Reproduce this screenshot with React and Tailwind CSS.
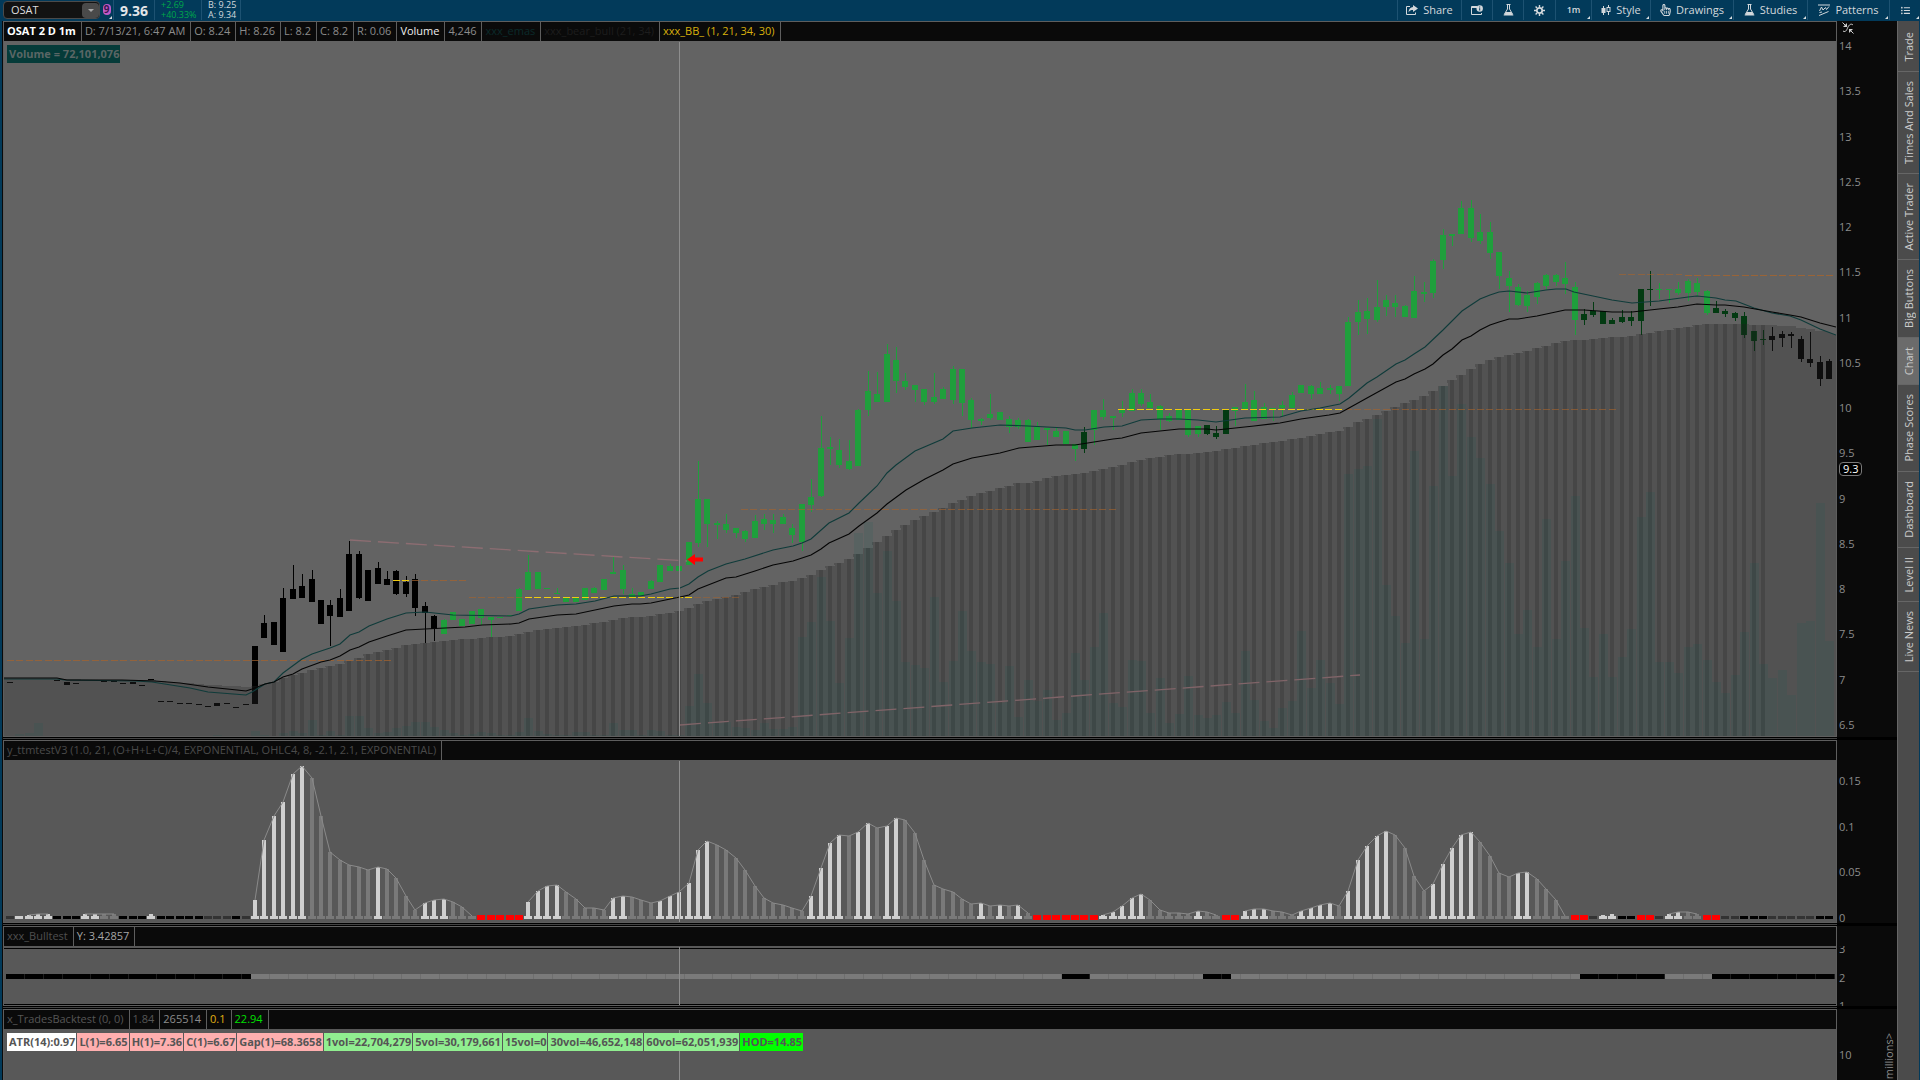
import { FaListUl, FaRegHandPointer } from "react-icons/fa";

// [high, open/close top, open/close bottom, low] for every one-minute bar
const candles = [
  [682, 682, 683, 683], null, null, null, null,
  [680, 680, 681, 681], [682, 682, 685, 685], [683, 683, 684, 684], null, null,
  [681, 681, 682, 682], [681, 681, 682, 682], [683, 683, 684, 684], [682, 682, 684, 684], [685, 685, 686, 686],
  [679, 679, 680, 680], [701, 701, 702, 702], [701, 701, 702, 702], [703, 703, 704, 704], [703, 703, 704, 704],
  [704, 704, 705, 705], [706, 706, 707, 707], [703, 703, 706, 706], [703, 703, 704, 704], [707, 707, 708, 708],
  [704, 704, 705, 705], [646, 646, 704, 704], [615, 623, 638, 638], [622, 622, 645, 645], [588, 598, 652, 652],
  [565, 589, 599, 599], [574, 586, 598, 598], [570, 579, 602, 602], [600, 600, 624, 624], [600, 605, 616, 646],
  [589, 598, 617, 617], [541, 554, 611, 611], [551, 554, 598, 599], [570, 570, 601, 601], [562, 568, 584, 584],
  [571, 579, 585, 585], [570, 571, 594, 595], [576, 582, 594, 597], [574, 579, 608, 616], [602, 606, 613, 643],
  [615, 616, 629, 641], [619, 620, 634, 634], [612, 612, 620, 620], [619, 619, 626, 626], [611, 611, 624, 624],
  [609, 609, 618, 625], [617, 617, 620, 637], [617, 617, 618, 618], [615, 615, 616, 616], [588, 589, 611, 611],
  [555, 572, 590, 590], [572, 572, 589, 589], [588, 588, 589, 589], [588, 593, 594, 594], [598, 598, 602, 602],
  [598, 598, 602, 602], [588, 588, 600, 600], [587, 588, 593, 593], [579, 579, 590, 590], [557, 572, 574, 574],
  [565, 570, 589, 594], [588, 594, 597, 598], [592, 592, 596, 596], [580, 581, 589, 589], [565, 565, 582, 582],
  [564, 566, 571, 571], [566, 566, 571, 571], [542, 542, 565, 565], [461, 499, 543, 547], [499, 499, 524, 547],
  [521, 523, 525, 539], [514, 524, 530, 533], [528, 528, 533, 538], [530, 531, 539, 542], [515, 521, 538, 538],
  [514, 519, 524, 530], [514, 520, 524, 533], [514, 517, 524, 524], [524, 528, 535, 543], [504, 504, 542, 551],
  [479, 497, 505, 512], [416, 448, 496, 497], [437, 447, 449, 465], [439, 450, 465, 468], [440, 461, 469, 470],
  [409, 410, 466, 466], [371, 391, 410, 416], [372, 394, 402, 402], [344, 354, 402, 402], [347, 360, 381, 393],
  [373, 381, 387, 390], [385, 385, 390, 402], [389, 389, 402, 405], [373, 397, 402, 404], [387, 389, 399, 399],
  [366, 369, 400, 404], [369, 369, 403, 416], [398, 400, 420, 428], [418, 419, 421, 425], [394, 414, 418, 420],
  [412, 412, 420, 420], [416, 419, 427, 433], [418, 420, 427, 429], [419, 420, 442, 442], [422, 427, 440, 440],
  [428, 428, 430, 445], [428, 431, 437, 437], [431, 431, 444, 444], [444, 444, 449, 461], [427, 432, 449, 453],
  [410, 410, 430, 445], [399, 410, 417, 420], [416, 416, 418, 430], [401, 409, 413, 417], [389, 393, 411, 411],
  [389, 393, 404, 406], [394, 402, 408, 408], [405, 406, 419, 430], [413, 416, 421, 422], [409, 409, 420, 420],
  [409, 409, 435, 437], [426, 426, 434, 437], [425, 425, 434, 435], [426, 433, 437, 439], [409, 410, 434, 434],
  [407, 407, 411, 426], [384, 402, 409, 409], [391, 400, 421, 421], [403, 407, 419, 419], [408, 408, 410, 421],
  [401, 405, 408, 416], [392, 395, 408, 408], [385, 385, 393, 393], [385, 386, 394, 399], [382, 388, 394, 394],
  [385, 388, 390, 394], [386, 386, 394, 401], [317, 322, 386, 386], [300, 312, 322, 335], [298, 311, 319, 334],
  [280, 307, 320, 322], [295, 300, 307, 316], [295, 303, 307, 317], [305, 306, 317, 317], [276, 291, 318, 318],
  [282, 292, 294, 302], [259, 261, 293, 298], [229, 235, 260, 269], [234, 234, 236, 246], [201, 208, 234, 234],
  [200, 208, 238, 242], [214, 232, 241, 244], [222, 232, 253, 259], [252, 252, 276, 289], [271, 278, 286, 312],
  [284, 287, 305, 306], [291, 295, 306, 312], [282, 283, 297, 304], [274, 275, 286, 290], [274, 275, 282, 286],
  [262, 278, 284, 294], [282, 287, 320, 335], [309, 314, 320, 325], [302, 311, 315, 317], [311, 311, 324, 324],
  [318, 320, 324, 324], [310, 317, 322, 323], [311, 317, 321, 326], [289, 289, 321, 335], [271, 289, 290, 306],
  [283, 289, 290, 299], [289, 289, 290, 303], [282, 289, 293, 295], [279, 281, 293, 301], [278, 283, 292, 296],
  [290, 291, 313, 315], [301, 308, 313, 313], [309, 311, 314, 317], [312, 313, 318, 321], [312, 316, 335, 338],
  [331, 331, 341, 351], [330, 339, 340, 345], [327, 336, 340, 351], [331, 334, 338, 347], [332, 334, 336, 348],
  [336, 339, 359, 362], [332, 359, 363, 367], [356, 362, 379, 386], [359, 361, 379, 379],
];

const volumeTops = [
  736, 734, 733, 723, 736, 736, 736, 736, 736, 736, 736, 736, 736, 736, 736, 736, 736, 736, 736, 736,
  736, 736, 735, 736, 736, 736, 731, 735, 736, 733, 731, 733, 720, 735, 731, 735, 716, 716, 728, 733,
  732, 728, 726, 722, 722, 727, 730, 733, 735, 734, 732, 733, 735, 735, 732, 718, 731, 734, 735, 735,
  732, 732, 735, 735, 723, 730, 730, 735, 730, 731, 735, 735, 706, 674, 703, 723, 722, 727, 728, 730,
  723, 729, 729, 727, 637, 622, 577, 621, 683, 638, 533, 522, 593, 551, 601, 662, 665, 668, 597, 682,
  661, 611, 651, 662, 664, 703, 666, 717, 680, 701, 690, 720, 713, 653, 680, 647, 613, 703, 707, 660,
  661, 713, 678, 723, 714, 676, 715, 718, 715, 702, 713, 651, 700, 721, 728, 708, 701, 631, 688, 660,
  683, 704, 474, 469, 466, 419, 585, 616, 643, 451, 639, 486, 386, 476, 404, 437, 458, 484, 531, 563,
  634, 610, 647, 519, 639, 561, 496, 628, 677, 634, 677, 657, 629, 517, 492, 662, 662, 673, 647, 644,
  660, 682, 693, 675, 632, 563, 664, 678, 670, 695, 623, 621, 503, 641,
];

const fastEma =
  "4,679 57,679 65,680 135,681 152,682 190,688 208,692 246,695 252,692 265,684 274,682 283,673 302,659 312,654 330,648 340,644 350,635 359,632 369,626 387,619 406,613 425,612 453,615 511,616 519,614 529,609 557,605 576,604 595,601 614,596 640,596 651,594 670,589 680,588 689,584 698,577 708,571 726,564 745,559 773,550 793,546 802,543 811,539 829,523 849,513 859,503 877,486 887,473 896,465 915,451 943,439 953,431 972,428 1000,425 1028,426 1066,428 1075,430 1085,430 1104,427 1122,426 1141,420 1160,419 1179,419 1198,420 1216,422 1245,418 1280,417 1301,411 1320,408 1340,404 1349,398 1367,383 1377,377 1396,364 1405,360 1414,354 1425,347 1443,330 1462,311 1480,299 1490,295 1499,292 1509,291 1527,293 1546,290 1556,289 1566,289 1574,292 1593,296 1612,300 1632,303 1659,301 1688,297 1697,296 1716,298 1725,300 1736,301 1754,308 1772,313 1790,316 1801,320 1820,329 1836,335";

const slowEma =
  "4,678 57,678 67,680 122,680 155,681 180,683 208,687 237,690 246,691 252,689 265,684 274,682 283,677 293,674 302,669 321,662 330,660 340,656 350,650 359,647 369,642 387,636 406,630 425,629 465,627 482,625 511,624 519,623 529,619 557,615 576,614 614,606 632,604 640,604 651,603 680,597 689,595 698,589 726,578 736,577 755,571 773,565 793,561 811,555 821,549 829,543 849,534 859,526 877,513 887,504 906,490 925,479 943,470 953,464 972,458 1000,453 1019,448 1056,445 1075,445 1094,442 1113,439 1122,438 1141,433 1179,429 1207,429 1216,430 1226,429 1254,426 1280,423 1301,419 1329,415 1340,413 1349,408 1367,398 1396,382 1405,379 1414,374 1425,369 1433,364 1443,355 1452,349 1462,340 1471,336 1480,330 1490,325 1499,322 1509,319 1518,319 1537,316 1565,310 1584,310 1612,312 1632,312 1659,309 1678,307 1697,304 1716,305 1725,305 1744,307 1772,312 1790,315 1801,317 1820,323 1836,327";

const cloud = [
  [4, 679], [152, 680], [171, 682], [208, 685], [246, 687], [259, 685], [274, 682], [283, 678], [302, 673],
  [312, 670], [330, 666], [350, 661], [369, 654], [387, 650], [406, 645], [444, 641], [491, 637], [511, 636],
  [519, 634], [538, 630], [576, 626], [614, 620], [623, 618], [640, 617], [651, 616], [680, 611], [689, 608],
  [698, 604], [708, 601], [736, 595], [755, 589], [783, 582], [793, 581], [811, 575], [829, 566], [849, 559],
  [859, 553], [877, 542], [896, 530], [915, 520], [943, 508], [953, 503], [972, 496], [1000, 488], [1019, 483],
  [1028, 483], [1056, 476], [1085, 473], [1122, 465], [1141, 460], [1169, 455], [1198, 453], [1216, 451],
  [1254, 445], [1280, 441], [1301, 438], [1320, 434], [1339, 431], [1349, 426], [1377, 415], [1396, 407],
  [1424, 396], [1443, 386], [1462, 374], [1480, 364], [1499, 357], [1527, 351], [1546, 346], [1565, 341],
  [1584, 340], [1603, 338], [1631, 336], [1641, 334], [1669, 330], [1697, 325], [1716, 324], [1744, 324],
  [1762, 325], [1790, 326], [1810, 329], [1836, 335],
];

const levels = [
  { x1: 7, x2: 392, y: 660, color: "#a8642c", opacity: 0.7 },
  { x1: 393, x2: 411, y: 580, color: "#f0cb10", opacity: 1 },
  { x1: 412, x2: 467, y: 580, color: "#a8642c", opacity: 0.7 },
  { x1: 469, x2: 524, y: 597, color: "#a8642c", opacity: 0.6 },
  { x1: 525, x2: 693, y: 597, color: "#f0cb10", opacity: 1 },
  { x1: 694, x2: 740, y: 597, color: "#a8642c", opacity: 0.5 },
  { x1: 741, x2: 1117, y: 509, color: "#a8642c", opacity: 0.6 },
  { x1: 1118, x2: 1344, y: 409, color: "#f0cb10", opacity: 1 },
  { x1: 1345, x2: 1616, y: 409, color: "#a8642c", opacity: 0.6 },
  { x1: 1619, x2: 1682, y: 274, color: "#a8642c", opacity: 0.6 },
  { x1: 1685, x2: 1836, y: 275, color: "#a8642c", opacity: 0.8 },
];

// squeeze state per bar: w rising, g falling, b black, d dark, r red
const states =
  "dwwwwbbbwwggbbbwbbbbbdddbd" +
  "wwwwwwgggggggwggggwwwggg" +
  "rrrrrwwwwgggggwwgggwwwwwwgggggggggg" +
  "wwwwgwwgwwggggggggwgwgwg" +
  "rrrrrrrwwwwwgggggwggrrwwwgggwwwwgwwwwwgggg" +
  "wwwwwggggwwggggrrdwwbbrrdwwggrrddbbbdddddbb";

const squeezeTops = [
  918, 916, 915, 914, 914, 918, 918, 918, 914, 914, 914, 914, 918, 918, 918, 914, 918, 918, 918, 918,
  918, 918, 918, 918, 918, 918, 900, 840, 816, 802, 774, 766, 778, 816, 852, 860, 865, 867, 870, 867,
  869, 878, 896, 910, 903, 900, 899, 902, 907, 916, 918, 918, 918, 918, 918, 902, 891, 886, 885, 892,
  899, 908, 908, 910, 898, 896, 897, 900, 903, 901, 896, 892, 883, 850, 841, 845, 850, 858, 870, 886,
  898, 903, 905, 908, 911, 896, 868, 843, 835, 836, 832, 823, 828, 826, 818, 820, 833, 860, 885, 889,
  892, 899, 904, 903, 906, 905, 906, 905, 913, 918, 918, 918, 918, 918, 918, 918, 915, 912, 906, 898,
  894, 900, 910, 913, 913, 914, 911, 912, 915, 918, 918, 911, 909, 909, 911, 912, 915, 911, 908, 905,
  903, 906, 891, 860, 846, 836, 831, 835, 848, 876, 891, 884, 864, 848, 835, 832, 842, 856, 873, 877,
  873, 872, 879, 889, 900, 916, 918, 918, 918, 915, 914, 918, 918, 918, 918, 918, 914, 912, 912, 914,
  918, 918, 918, 918, 918, 918, 918, 918, 918, 918, 918, 918, 918, 918,
];

const stateColors = { w: "#cfcfcf", g: "#797979", b: "#000000", d: "#333333", r: "#ff0000" };

const priceLabels = ["14", "13.5", "13", "12.5", "12", "11.5", "11", "10.5", "10", "9.5", "9", "8.5", "8", "7.5", "7", "6.5"];

const sideTabs = ["Trade", "Times And Sales", "Active Trader", "Big Buttons", "Chart", "Phase Scores", "Dashboard", "Level II", "Live News"];

const badges = [
  { text: "ATR(14):0.97", style: "bg-white" },
  { text: "L(1)=6.65", style: "bg-[#ffafaf]" },
  { text: "H(1)=7.36", style: "bg-[#ffafaf]" },
  { text: "C(1)=6.67", style: "bg-[#ffafaf]" },
  { text: "Gap(1)=68.3658", style: "bg-[#ffafaf]" },
  { text: "1vol=22,704,279", style: "bg-[#90ee90]" },
  { text: "5vol=30,179,661", style: "bg-[#90ee90]" },
  { text: "15vol=0", style: "bg-[#90ee90]" },
  { text: "30vol=46,652,148", style: "bg-[#90ee90]" },
  { text: "60vol=62,051,939", style: "bg-[#90ee90]" },
  { text: "HOD=14.85", style: "bg-[#00ff00]" },
];

const barX = (i) => Math.round(10 + i * 9.425);

function cloudY(x) {
  const k = cloud.findIndex((p) => p[0] >= x);
  if (k <= 0) return cloud[0][1];
  const [x0, y0] = cloud[k - 1];
  const [x1, y1] = cloud[k];
  return Math.round(y0 + ((x - x0) / (x1 - x0)) * (y1 - y0));
}

function candleColor(i) {
  if (i < 46 || i > 186) return "#000000";
  if (i === 114 || (i > 126 && i < 130) || (i > 166 && i < 175) || i > 180) return "#033a12";
  return "#1f9f3c";
}

function isBear(i) {
  return i < 26 || (i > 111 && i < 115) || (i > 126 && i < 130) || (i > 166 && i < 176) || i > 180;
}

function Crosshair({ y1, y2 }) {
  return <rect x="679" y={y1} width="1" height={y2 - y1} fill="#8e8e8e" />;
}

function PriceChart() {
  return (
    <svg className="block h-full w-full" viewBox="4 41 1832 695" preserveAspectRatio="none" shapeRendering="crispEdges">
      <rect x="4" y="41" width="1832" height="695" fill="#636363" />
      {candles.map((c, i) =>
        c && (
          <g key={i} fill={candleColor(i)}>
            <rect x={barX(i)} y={c[0]} width="1" height={c[3] - c[0]} />
            <rect x={barX(i) - 3} y={c[1]} width="6" height={c[2] - c[1]} />
          </g>
        )
      )}
      <polygon
        points={`4,736 4,679 ${Array.from({ length: 193 }, (_, i) => `${barX(i) - 5},${cloudY(barX(i))} ${barX(i) + 5},${cloudY(barX(i))}`).join(" ")} 1836,335 1836,736`}
        fill="#2e2e2e"
        fillOpacity="0.31"
      />
      {candles.map((_, i) =>
        i > 27 && i < 187 && (
          <rect key={i} x={barX(i) - 2} y={cloudY(barX(i))} width="4" height={736 - cloudY(barX(i))} fill="#000" fillOpacity="0.14" />
        )
      )}
      {volumeTops.map((y, i) => (
        <rect key={i} x={barX(i) - 4} y={y} width="9" height={736 - y} fill="#00605a" fillOpacity="0.1" />
      ))}
      {levels.map((l) => (
        <line key={`${l.x1}-${l.y}`} x1={l.x1} x2={l.x2} y1={l.y + 0.5} y2={l.y + 0.5} stroke={l.color} strokeOpacity={l.opacity} strokeDasharray="7 2.425" />
      ))}
      <g shapeRendering="geometricPrecision" fill="none">
        <line x1="350" y1="540" x2="687" y2="561" stroke="#8d6d72" strokeDasharray="21 7" strokeWidth="1.3" />
        <line x1="680" y1="725" x2="1360" y2="675" stroke="#806468" strokeDasharray="21 7" strokeWidth="1.3" />
        <polyline points={fastEma} stroke="#0f3b3a" strokeWidth="1.1" />
        <polyline points={slowEma} stroke="#050505" strokeWidth="1.1" />
      </g>
      <Crosshair y1={42} y2={736} />
      <path d="M687 559.5 L695 554 V557.5 H703 V561.5 H695 V565 Z" fill="#ff0000" shapeRendering="geometricPrecision" />
    </svg>
  );
}

function SqueezeChart() {
  const line = squeezeTops.map((y, i) => `${barX(i)},${y}`);
  const runs = [line.slice(2, 5), line.slice(8, 12), line.slice(26, 50), line.slice(55, 109), line.slice(116, 129), line.slice(131, 166), line.slice(176, 180)];
  return (
    <svg className="block h-full w-full" viewBox="4 760 1832 162" preserveAspectRatio="none" shapeRendering="crispEdges">
      <rect x="4" y="760" width="1832" height="162" fill="#585858" />
      {squeezeTops.map((y, i) => {
        const s = states[i];
        const red = s === "r";
        return (
          <g key={i} fill={stateColors[s]}>
            {y < 918 && <rect x={barX(i) - 2} y={y} width="4" height={919 - y} />}
            <rect x={barX(i) - 4} y={red ? 915 : 916} width="8" height={red ? 5 : 3} rx={red ? 1 : 0} />
          </g>
        );
      })}
      <g fill="none" stroke="#8a8a8a" shapeRendering="geometricPrecision">
        {runs.map((r) => <polyline key={r[0]} points={r.join(" ")} />)}
      </g>
      <Crosshair y1={761} y2={922} />
    </svg>
  );
}

function BullChart() {
  return (
    <svg className="block h-full w-full" viewBox="4 946 1832 59" preserveAspectRatio="none" shapeRendering="crispEdges">
      <rect x="4" y="946" width="1832" height="59" fill="#585858" />
      <rect x="4" y="948" width="1832" height="1" fill="#000" />
      <rect x="4" y="1004" width="1832" height="1" fill="#000" />
      <rect x="6" y="974" width="1828" height="5" fill="#6e6e6e" />
      {squeezeTops.map((_, i) => (
        <g key={i}>
          {isBear(i) && <rect x={barX(i) - 4} y="974" width="10" height="5" fill="#1e1e1e" />}
          <rect x={barX(i) - 4} y="974" width="9" height="5" fill={isBear(i) ? "#000" : "#7a7a7a"} />
        </g>
      ))}
      <Crosshair y1={947} y2={1005} />
    </svg>
  );
}

function TradesChart() {
  return (
    <svg className="block h-full w-full" viewBox="4 1029 1832 51" preserveAspectRatio="none" shapeRendering="crispEdges">
      <rect x="4" y="1029" width="1832" height="51" fill="#585858" />
      <Crosshair y1={1030} y2={1080} />
    </svg>
  );
}

function Panel({ cells, height, axis, last, children }) {
  return (
    <section className={`flex ${height}`}>
      <div className={`flex min-w-0 flex-1 flex-col border-x border-t border-[#5e5e5e] ${last ? "" : "border-b"}`}>
        <div className="flex h-[19px] shrink-0 overflow-hidden text-[11px] leading-[18px] whitespace-nowrap">
          {cells.map((c) => (
            <span key={c.text} className={`border-r border-[#5e5e5e] pr-[5px] pl-[3px] ${c.style}`}>{c.text}</span>
          ))}
        </div>
        <div className="relative min-h-0 flex-1">{children}</div>
      </div>
      <div className="relative w-[60px] overflow-hidden text-[11px] leading-4 text-[#8c8c8c]">{axis}</div>
    </section>
  );
}

function Divider() {
  return (
    <div className="flex h-[3px] shrink-0 items-center bg-black">
      <div className="mr-[60px] h-px flex-1 bg-[#444444]" />
    </div>
  );
}

function Corner() {
  return (
    <svg className="absolute right-px bottom-px h-[3px] w-[3px]" viewBox="0 0 3 3" fill="#d8dde0">
      <path d="M3 0V3H0Z" />
    </svg>
  );
}

function ToolButton({ width, label, title, corner, children }) {
  return (
    <button title={title || label} className={`relative flex h-5 items-center justify-center gap-[5px] border-l border-[#1d5272] ${width}`}>
      {children}
      {label && <span>{label}</span>}
      {corner && <Corner />}
    </button>
  );
}

function Flask() {
  return (
    <svg className="h-3 w-[11px]" viewBox="0 0 11 12" fill="none" stroke="currentColor">
      <path d="M3.5 .5H7.5M4.5 .5V5L1.200 10.500M6.500 .5V5L9.800 10.500" />
      <path d="M3 8H8L10.500 11.500H.5Z" fill="currentColor" stroke="none" />
    </svg>
  );
}

function TopBar() {
  return (
    <header className="flex h-[21px] shrink-0 items-start bg-[#023a5a] pl-[3px] text-[11px] leading-4 text-[#d3d8dc]">
      <div className="mt-px flex h-[18px] w-[97px] items-center rounded-sm border border-[#4a4a4a] bg-[#121212]">
        <input aria-label="Symbol" defaultValue="OSAT" className="min-w-0 flex-1 bg-transparent pl-[7px] text-[11px] text-[#dddddd] outline-none" />
        <button title="Symbol list" className="flex h-[15px] w-[17px] items-center justify-center rounded-sm bg-[#4a4a4a]">
          <svg className="h-[3px] w-[6px]" viewBox="0 0 6 3" fill="#a8a8a8"><path d="M0 0H6L3 3Z" /></svg>
        </button>
      </div>
      <button title="Link color" className="relative flex h-5 w-[13px] items-center justify-center pb-[2px]">
        <span className="h-[11px] w-2 rounded-sm bg-[#c05ac8] text-center text-[10px] leading-[11px] font-bold text-[#3c1650]">9</span>
        <Corner />
      </button>
      <strong className="flex h-5 w-[41px] items-center justify-center border-l border-[#1d5272] pt-[2px] text-sm text-[#e2e6e9]">9.36</strong>
      <div className="h-5 w-[47px] border-l border-[#1d5272] pl-[6px] text-[9px] leading-[10px] text-[#00a84a]">
        <div>+2.69</div>
        <div>+40.33%</div>
      </div>
      <div className="h-5 w-10 border-x border-[#1d5272] pl-[6px] text-[9px] leading-[10px]">
        <div>B: 9.25</div>
        <div>A: 9.34</div>
      </div>
      <nav className="ml-auto flex">
        <ToolButton width="w-16" label="Share">
          <svg className="h-[10px] w-3" viewBox="0 0 12 10" fill="none" stroke="currentColor">
            <path d="M4 1.500H.5V9.500H9.500V7.500" />
            <path d="M7 0L12 3.500L7 7V5C5 5 3.500 5.600 2.500 7.500C2.500 4 4.500 2.200 7 2Z" fill="currentColor" stroke="none" />
          </svg>
        </ToolButton>
        <ToolButton width="w-[31px]" title="Detach">
          <svg className="h-[10px] w-3" viewBox="0 0 12 10" fill="none" stroke="currentColor">
            <path d="M6 1.5H.5V9.500H10.500V8M.5 2.500H6" />
            <circle cx="8.700" cy="3.500" r="3.200" fill="currentColor" stroke="none" />
            <path d="M8.700 1.500V2.500M8.700 3.200V5.500" stroke="#023a5a" />
          </svg>
        </ToolButton>
        <ToolButton width="w-[31px]" title="Edit studies"><Flask /></ToolButton>
        <ToolButton width="w-[32px]" title="Chart settings">
          <svg className="h-[11px] w-[11px]" viewBox="0 0 11 11" fill="none" stroke="currentColor">
            <circle cx="5.5" cy="5.5" r="2.700" strokeWidth="1.800" />
            <path d="M5.5 0V2M5.5 9V11M0 5.5H2M9 5.5H11M1.600 1.600L3 3M8 8L9.400 9.400M9.400 1.600L8 3M3 8L1.600 9.400" strokeWidth="1.400" />
          </svg>
        </ToolButton>
        <ToolButton width="w-9" title="Time frame" corner><span className="text-[9px] font-semibold">1m</span></ToolButton>
        <ToolButton width="w-[59px]" label="Style" corner>
          <svg className="h-[11px] w-[10px]" viewBox="0 0 10 11" fill="currentColor">
            <path d="M2 1H3V3H4.500V8H3V10H2V8H.5V3H2Z" />
            <path d="M7 0H8V2H9.500V7H8V10H7V7H5.500V2H7ZM6.500 3V6H8.500V3Z" fillRule="evenodd" />
          </svg>
        </ToolButton>
        <ToolButton width="w-[83px]" label="Drawings" corner><FaRegHandPointer className="h-3 w-[11px]" /></ToolButton>
        <ToolButton width="w-[74px]" label="Studies" corner><Flask /></ToolButton>
        <ToolButton width="w-[82px]" label="Patterns" corner>
          <svg className="h-3 w-3" viewBox="0 0 12 12" fill="none" stroke="currentColor">
            <path d="M0 1H12M1.500 7L3.500 3L5 6L7.500 3.500L8.500 5.500L11 2.500" />
            <path d="M1 11.500L10.500 7.500M1.500 8.500L4 8" />
          </svg>
        </ToolButton>
        <ToolButton width="w-[31px]" title="Menu" corner><FaListUl className="h-[9px] w-[9px]" /></ToolButton>
      </nav>
    </header>
  );
}

export default function App() {
  const gray = "text-[#8c8c8c]";
  return (
    <div className="flex h-screen flex-col overflow-hidden bg-[#0a0a0a] font-['Open_Sans','Noto_Sans',sans-serif]">
      <TopBar />
      <div className="flex min-h-0 flex-1 border-r border-l-2 border-[#023a5a]">
        <main className="ml-px flex min-w-0 flex-1 flex-col">
          <Panel
            height="min-h-0 flex-1"
            cells={[
              { text: "OSAT 2 D 1m", style: "font-bold text-white" },
              { text: "D: 7/13/21, 6:47 AM", style: gray },
              { text: "O: 8.24", style: gray },
              { text: "H: 8.26", style: gray },
              { text: "L: 8.2", style: gray },
              { text: "C: 8.2", style: gray },
              { text: "R: 0.06", style: gray },
              { text: "Volume", style: "text-[#eeeeee]" },
              { text: "4,246", style: gray },
              { text: "xxx_emas", style: "text-[#0b2b2a]" },
              { text: "xxx_bear_bull (21, 34)", style: "text-[#1d1d1d]" },
              { text: "xxx_BB_ (1, 21, 34, 30)", style: "text-[#d8b00c]" },
            ]}
            axis={
              <div className="flex h-full flex-col pb-1 pl-[2px]">
                <button title="Fit scale" className="mt-px ml-[3px] h-3 w-3 shrink-0 text-[#d0d0d0]">
                  <svg className="h-3 w-3" viewBox="0 0 12 12" fill="none" stroke="currentColor">
                    <path d="M.5 .5L3 3M11.500 11.500L9 9" />
                    <path d="M5 1V5H1ZM7 11V7H11Z" fill="currentColor" stroke="none" />
                    <path d="M1 9C4 11 5 7 6 5S9 1 11 3" />
                  </svg>
                </button>
                <div className="mt-1 flex min-h-0 flex-1 flex-col justify-between">
                  {priceLabels.map((p) => <span key={p}>{p}</span>)}
                </div>
                <span className="absolute top-[62.6%] left-[2px] -translate-y-1/2 rounded border border-[#7a7a7a] bg-black px-[3px] leading-3 text-white">9.3</span>
              </div>
            }
          >
            <PriceChart />
            <div className="absolute top-1 left-[3px] bg-[#053b39] pr-px pl-[2px] text-[11px] leading-[18px] font-bold text-[#5a6665]">Volume = 72,101,076</div>
          </Panel>
          <Divider />
          <Panel
            height="h-[183px] shrink-0"
            cells={[{ text: "y_ttmtestV3 (1.0, 21, (O+H+L+C)/4, EXPONENTIAL, OHLC4, 8, -2.1, 2.1, EXPONENTIAL)", style: "text-[#4a4a4a]" }]}
            axis={
              <div className="flex h-full flex-col justify-between pt-[33px] pl-[2px]">
                <span>0.15</span>
                <span>0.1</span>
                <span>0.05</span>
                <span className="-mb-[3px]">0</span>
              </div>
            }
          >
            <SqueezeChart />
          </Panel>
          <Divider />
          <Panel
            height="h-20 shrink-0"
            cells={[
              { text: "xxx_Bulltest", style: "text-[#4f4f4f]" },
              { text: "Y: 3.42857", style: "text-[#a6a6a6]" },
            ]}
            axis={
              <div className="flex h-full flex-col pt-5 pl-[2px]">
                <div className="-mb-2 flex min-h-0 flex-1 flex-col justify-between overflow-hidden">
                  <span className="-mt-[5px]">3</span>
                  <span>2</span>
                  <span>1</span>
                </div>
              </div>
            }
          >
            <BullChart />
          </Panel>
          <Divider />
          <Panel
            height="h-[71px] shrink-0"
            last
            cells={[
              { text: "x_TradesBacktest (0, 0)", style: "text-[#565656]" },
              { text: "1.84", style: "text-[#565656]" },
              { text: "265514", style: gray },
              { text: "0.1", style: "text-[#e0b010]" },
              { text: "22.94", style: "text-[#00e000]" },
            ]}
            axis={
              <div className="flex h-full items-start justify-between pt-[24px] pl-[2px]">
                <span className="mt-[14px]">10</span>
                <span className="rotate-180 [writing-mode:vertical-rl]">millions&gt;</span>
              </div>
            }
          >
            <TradesChart />
            <div className="absolute top-1 left-[3px] flex gap-px text-[11px] leading-[18px] font-bold whitespace-nowrap text-[#555555]">
              {badges.map((b) => <span key={b.text} className={`pr-px pl-[2px] ${b.style}`}>{b.text}</span>)}
            </div>
          </Panel>
        </main>
        <aside className="flex w-[22px] flex-col border-l border-[#666666] bg-[#4b4b4b] pt-[2px] text-[11px] text-[#cccccc]">
          {sideTabs.map((t) => (
            <button key={t} className={`flex w-full items-center justify-center border-b border-[#666666] py-[9px] ${t === "Chart" ? "bg-[#6b6b6b]" : ""}`}>
              <span className="rotate-180 leading-5 whitespace-nowrap [writing-mode:vertical-rl]">{t}</span>
            </button>
          ))}
        </aside>
      </div>
    </div>
  );
}
